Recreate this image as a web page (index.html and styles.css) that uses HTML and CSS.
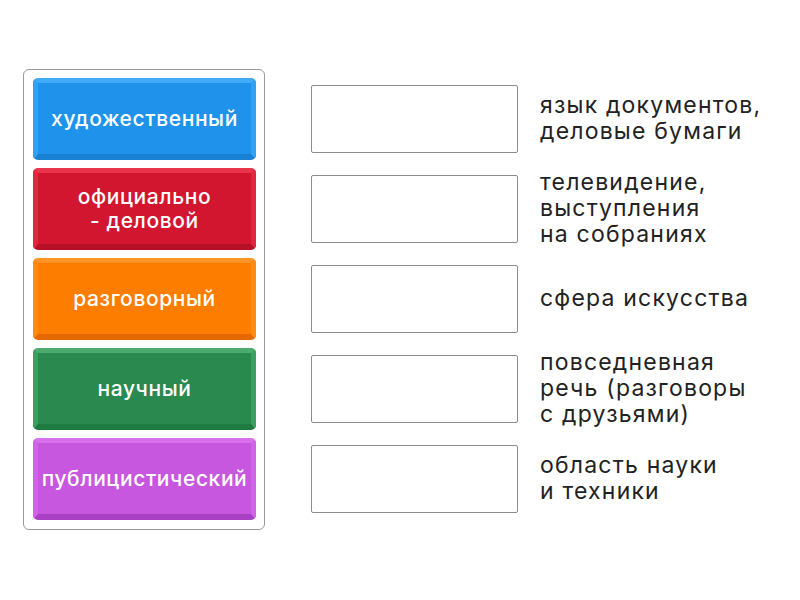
FILE: index.html
```html
<!DOCTYPE html>
<html>
<head>
<meta charset="utf-8">
<link rel="stylesheet" href="styles.css">
</head>
<body>
<div class="page">
  <div class="bank">
    <div class="tile blue">художественный</div>
    <div class="tile red">официально<br>- деловой</div>
    <div class="tile orange">разговорный</div>
    <div class="tile green">научный</div>
    <div class="tile purple">публицистический</div>
  </div>
  <div class="targets">
    <div class="row"><div class="slot"></div><div class="label">язык документов,<br>деловые бумаги</div></div>
    <div class="row"><div class="slot"></div><div class="label">телевидение,<br>выступления<br>на собраниях</div></div>
    <div class="row"><div class="slot"></div><div class="label">сфера искусства</div></div>
    <div class="row"><div class="slot"></div><div class="label">повседневная<br>речь (разговоры<br>с друзьями)</div></div>
    <div class="row"><div class="slot"></div><div class="label">область науки<br>и техники</div></div>
  </div>
</div>
</body>
</html>
```
FILE: styles.css
```css
html, body {
  margin: 0;
  padding: 0;
  background: #ffffff;
  width: 800px;
  height: 600px;
  overflow: hidden;
}
.page {
  display: flex;
  align-items: flex-start;
  padding: 69px 0 0 23px;
  font-family: "Inter", "Roboto", "Liberation Sans", sans-serif;
}
.bank {
  display: flex;
  flex-direction: column;
  gap: 8px;
  padding: 8px 8px 9px 9px;
  border: 1px solid #9a9a9a;
  border-radius: 6px;
}
.tile {
  box-sizing: border-box;
  width: 223px;
  height: 82px;
  border-radius: 5px;
  border-style: solid;
  border-width: 5px 5px 6px 5px;
  display: flex;
  align-items: center;
  justify-content: center;
  text-align: center;
  color: #ffffff;
  font-size: 21px;
  font-weight: 500;
  letter-spacing: 0.6px;
  line-height: 24px;
  white-space: nowrap;
}
.blue {
  background: #1f93ec;
  border-color: #42aaf7 #34a0f2 #1a80d4 #34a0f2;
}
.red {
  background: #d2162f;
  border-color: #e8354c #df283f #b70f26 #df283f;
}
.orange {
  background: #fc7d00;
  border-color: #ff9426 #ff8a14 #e36900 #ff8a14;
}
.green {
  background: #29894e;
  border-color: #4cab6f #3d9f61 #1f7a42 #3d9f61;
}
.purple {
  background: #c757de;
  border-color: #d870ec #d064e6 #a93fc2 #d064e6;
}
.targets {
  display: flex;
  flex-direction: column;
  gap: 8px;
  padding-top: 9px;
  margin-left: 46px;
}
.row {
  height: 82px;
  display: flex;
  align-items: center;
}
.slot {
  box-sizing: border-box;
  width: 207px;
  height: 68px;
  border: 1px solid #8c8c8c;
  border-radius: 2px;
  background: #fff;
}
.label {
  margin-left: 22px;
  margin-top: -3px;
  font-size: 23px;
  letter-spacing: 1.2px;
  line-height: 26px;
  color: #222222;
  white-space: nowrap;
}
```
